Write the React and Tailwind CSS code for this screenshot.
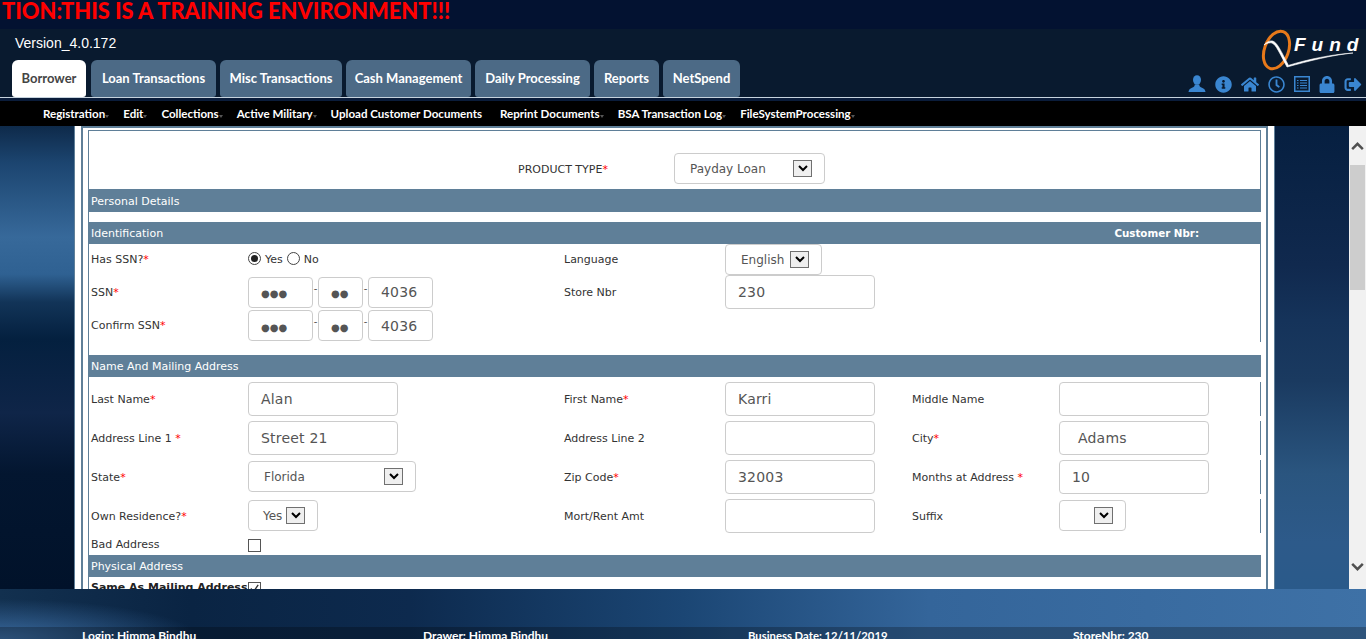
import React from "react";
import { FaHome, FaInfoCircle, FaLock, FaRegClock, FaSignOutAlt } from "react-icons/fa";

const tabs = [
  { label: "Borrower", width: "w-[74px] mr-[1px]", active: true },
  { label: "Loan Transactions", width: "w-[125px]" },
  { label: "Misc Transactions", width: "w-[122px]" },
  { label: "Cash Management", width: "w-[125px]" },
  { label: "Daily Processing", width: "w-[115px]" },
  { label: "Reports", width: "w-[65px]" },
  { label: "NetSpend", width: "w-[77px]" },
];

const menuItems = [
  { label: "Registration", arrow: true },
  { label: "Edit", arrow: true },
  { label: "Collections", arrow: true },
  { label: "Active Military", arrow: true },
  { label: "Upload Customer Documents" },
  { label: "Reprint Documents", arrow: true },
  { label: "BSA Transaction Log", arrow: true },
  { label: "FileSystemProcessing", arrow: true },
];

function UserIcon() {
  return (
    <svg viewBox="0 0 18 18" className="w-[18px] h-[18px]" fill="currentColor">
      <ellipse cx="9" cy="5" rx="4" ry="4.8" />
      <path d="M6.6 9.5 C7 11 6 12 3.5 13 C1.5 13.8 0.8 15 0.5 17 L17.5 17 C17.2 15 16.5 13.8 14.5 13 C12 12 11 11 11.4 9.5 Z" />
    </svg>
  );
}

function ListIcon() {
  return (
    <svg viewBox="0 0 16 16" className="w-[16px] h-[16px]" fill="none" stroke="currentColor">
      <rect x="0.75" y="0.75" width="14.5" height="14.5" strokeWidth="1.5" />
      <path d="M3 4.5h1.5M6 4.5h7M3 7h1.5M6 7h7M3 9.5h1.5M6 9.5h7M3 12h1.5M6 12h7" strokeWidth="1.2" />
    </svg>
  );
}

function Logo() {
  return (
    <div className="relative w-[105px] h-[42px]">
      <svg viewBox="0 0 105 42" className="absolute inset-0 w-[105px] h-[42px]" fill="none">
        <ellipse cx="19.5" cy="21" rx="12" ry="19.5" transform="rotate(20 19.5 21)" stroke="#e8791a" strokeWidth="3" />
        <path d="M7 16 C10 12.5 13 11.5 15.5 12 C20 13 24 22 31 35.5 L31 36.5 C52 30 75 25.5 96 24 C75 26 52 32 30 38 C23 25 19 15.5 15 14 C13 13.5 10 14 7 16 Z" fill="#ffffff" stroke="#ffffff" strokeWidth="0.6" />
      </svg>
      <span className="absolute left-[37px] top-[4px] font-['Liberation_Sans',sans-serif] font-bold italic text-[19px] leading-[24px] tracking-[6px] text-white">
        Fund
      </span>
    </div>
  );
}

function Req({ space }) {
  return <span className="text-[#f00]">{space ? " *" : "*"}</span>;
}

function Input({ value, className = "w-[150px]", small }) {
  return (
    <div
      className={`flex items-center border border-[#ccc] rounded-[4px] bg-white text-[#555] pl-[12px] ${
        small ? "h-[31px] pt-[1px]" : "h-[34px]"
      } text-[14px] tracking-[0.2px] whitespace-nowrap ${className}`}
    >
      {value}
    </div>
  );
}

function Dots({ count, className }) {
  return (
    <div className={`flex items-center border border-[#ccc] rounded-[4px] bg-white text-[#555] pl-[12px] pt-[3px] h-[31px] text-[10px] ${className}`}>
      {"●".repeat(count)}
    </div>
  );
}

function Dash() {
  return <span className="w-[5px] flex justify-center text-[#555] text-[10px] -translate-y-[4px]">-</span>;
}

function SsnFields() {
  return (
    <div className="flex items-center">
      <Dots count={3} className="w-[65px]" />
      <Dash />
      <Dots count={2} className="w-[45px]" />
      <Dash />
      <Input value="4036" small className="w-[65px]" />
    </div>
  );
}

function SelectBox({ value, className, textClass = "pl-[15px]" }) {
  return (
    <div className={`flex items-center justify-between border border-[#ccc] rounded-[4px] bg-white text-[#555] h-[31px] text-[12px] pr-[12px] ${className}`}>
      <span className={textClass}>{value}</span>
      <span className="flex items-center justify-center w-[19px] h-[17px] border border-[#707070] bg-[#efefef] shrink-0">
        <svg viewBox="0 0 10 7" className="w-[10px] h-[7px]" fill="none" stroke="#000" strokeWidth="2">
          <path d="M1 1 L5 5 L9 1" />
        </svg>
      </span>
    </div>
  );
}

function Bar({ children, right, height = "h-[22px] pt-[2px]" }) {
  return (
    <div className={`flex items-center justify-between bg-[#5f7f98] text-white text-[11px] pl-[2px] pr-[62px] ${height}`}>
      <span>{children}</span>
      {right && <span className="font-bold text-[10.3px]">{right}</span>}
    </div>
  );
}

function Row({ height, children }) {
  return (
    <div className={`grid grid-cols-[157px_316px_161px_187px_147px_1fr] items-center pl-[2px] pr-[1px] border-r border-[#5f7f98] [&>span]:translate-y-[1px] ${height}`}>
      {children}
    </div>
  );
}

function Radio({ checked }) {
  return (
    <span className="inline-flex items-center justify-center w-[13px] h-[13px] rounded-full border border-[#444] bg-white -translate-y-[2px]">
      {checked && <span className="w-[7px] h-[7px] rounded-full bg-[#222]" />}
    </span>
  );
}

function ChevronButton({ up }) {
  return (
    <div className={`flex items-center justify-center h-[39px] ${up ? "" : "pb-[5px]"}`}>
      <svg viewBox="0 0 14 9" className="w-[13px] h-[8px]" fill="none" stroke="#505050" strokeWidth="2.8">
        <path d={up ? "M1 8 L7 2 L13 8" : "M1 1 L7 7 L13 1"} />
      </svg>
    </div>
  );
}

export default function App() {
  return (
    <div className="w-[1366px] h-[639px] overflow-hidden flex flex-col bg-[#04122c] font-['DejaVu_Sans',Verdana,sans-serif]">
      {/* header */}
      <div className="h-[29px] bg-[#031231] pl-[2px] whitespace-nowrap font-['Lato',sans-serif] font-black text-[23px] leading-[20px] text-[#f00]">
        <span className="inline-block origin-left scale-x-[0.95]">TION:THIS IS A TRAINING ENVIRONMENT!!!</span>
      </div>
      <div className="h-[68px] flex justify-between bg-[#091a2f]">
        <div className="flex flex-col pl-[12px]">
          <div className="h-[31px] pl-[3px] pt-[6px] font-['Liberation_Sans',sans-serif] text-[14px] leading-[16px] text-white">
            Version_4.0.172
          </div>
          <div className="flex gap-[4px] font-['Lato',sans-serif] font-bold text-[13px]">
            {tabs.map((tab) => (
              <div
                key={tab.label}
                className={`flex items-center justify-center h-[37px] rounded-t-[6px] rounded-b-[3px] ${tab.width} ${
                  tab.active ? "bg-white text-[#444]" : "bg-[#4c6a86] text-white"
                }`}
              >
                {tab.label}
              </div>
            ))}
          </div>
        </div>
        <div className="flex flex-col items-end pr-[4px]">
          <Logo />
          <div className="flex items-center gap-[9px] h-[20px] mt-[3px] text-[#3a86d1]">
            <UserIcon />
            <FaInfoCircle className="w-[17px] h-[17px]" />
            <FaHome className="w-[18px] h-[17px]" />
            <FaRegClock className="w-[17px] h-[17px]" />
            <ListIcon />
            <FaLock className="w-[16px] h-[17px]" />
            <FaSignOutAlt className="w-[18px] h-[17px]" />
          </div>
        </div>
      </div>
      <div className="h-[1px] bg-[#c5d2dd]" />
      <div className="h-[3px] bg-[#0a1c3a]" />
      <div className="h-[25px] bg-black flex items-center gap-[18px] pl-[43px] font-['Lato',sans-serif] font-bold text-[11.55px] text-white whitespace-nowrap">
        {menuItems.map((item) => (
          <span key={item.label} className="relative">
            {item.label}
            {item.arrow && (
              <span className="absolute right-[-4px] bottom-[4px] border-x-[2px] border-t-[3px] border-x-transparent border-t-[#555]" />
            )}
          </span>
        ))}
      </div>

      {/* main */}
      <div className="h-[463px] flex">
        <div className="w-[74px] bg-[linear-gradient(180deg,#0e2a4a_0%,#1c4570_8%,#37699a_24%,#2f6192_32%,#123458_38%,#04203f_46%,#0f2548_62%,#031630_75%,#01122a_100%)]" />
        <div className="w-[1201px] bg-white border-x border-[#5f7f98] px-[6px] overflow-hidden">
          <div className="h-full border-x-2 border-t-2 border-[#5f7f98] px-[5px] pt-[2px]">
            <div className="border-l border-t border-[#5f7f98] text-[11px] text-[#333] whitespace-nowrap h-full">
              <div className="flex items-center h-[58px] pt-[17px] pl-[429px] border-r border-[#5f7f98]">
                <span className="w-[156px] translate-y-[2px]">
                  PRODUCT TYPE<Req />
                </span>
                <SelectBox value="Payday Loan" className="w-[151px]" />
              </div>
              <Bar height="h-[23px] pt-[3px]">Personal Details</Bar>
              <div className="h-[10px]" />
              <Bar right="Customer Nbr:">Identification</Bar>

              <Row height="h-[31px]">
                <span>
                  Has SSN?<Req />
                </span>
                <span className="flex items-center gap-[4px]">
                  <Radio checked />
                  <span>Yes</span>
                  <Radio />
                  <span>No</span>
                </span>
                <span>Language</span>
                <SelectBox value="English" className="w-[97px]" textClass="pl-[15px]" />
              </Row>
              <Row height="h-[34px]">
                <span>
                  SSN<Req />
                </span>
                <SsnFields />
                <span>Store Nbr</span>
                <Input value="230" />
              </Row>
              <Row height="h-[33px]">
                <span>
                  Confirm SSN<Req />
                </span>
                <SsnFields />
              </Row>
              <div className="h-[13px]" />

              <Bar>Name And Mailing Address</Bar>
              <div className="h-[5px]" />
              <div className="flex flex-col gap-[5px]">
                <Row height="h-[34px]">
                  <span>
                    Last Name<Req />
                  </span>
                  <Input value="Alan" />
                  <span>
                    First Name<Req />
                  </span>
                  <Input value="Karri" />
                  <span>Middle Name</span>
                  <Input value="" />
                </Row>
                <Row height="h-[34px]">
                  <span>
                    Address Line 1 <Req />
                  </span>
                  <Input value="Street 21" />
                  <span>Address Line 2</span>
                  <Input value="" />
                  <span>
                    City<Req />
                  </span>
                  <Input value="Adams" className="w-[150px] pl-[18px]" />
                </Row>
                <Row height="h-[34px]">
                  <span>
                    State<Req />
                  </span>
                  <SelectBox value="Florida" className="w-[168px] mb-[1px]" textClass="pl-[15px]" />
                  <span>
                    Zip Code<Req />
                  </span>
                  <Input value="32003" />
                  <span>
                    Months at Address <Req />
                  </span>
                  <Input value="10" />
                </Row>
                <Row height="h-[34px]">
                  <span>
                    Own Residence?<Req />
                  </span>
                  <SelectBox value="Yes" className="w-[70px] pr-[12px] mb-[1px]" textClass="pl-[14px]" />
                  <span>Mort/Rent Amt</span>
                  <Input value="" />
                  <span>Suffix</span>
                  <SelectBox value="" className="w-[67px] mb-[1px]" />
                </Row>
              </div>
              <div className="grid grid-cols-[157px_1fr] items-center h-[22px] pl-[2px]">
                <span className="translate-y-[1px]">Bad Address</span>
                <span className="w-[13px] h-[13px] border border-[#555] bg-white translate-y-[1px]" />
              </div>
              <Bar>Physical Address</Bar>
              <div className="flex items-center gap-[1px] pl-[2px] h-[22px] font-bold text-[#222]">
                <span>Same As Mailing Address</span>
                <span className="flex items-center justify-center w-[13px] h-[13px] border border-[#555] bg-white">
                  <svg viewBox="0 0 12 12" className="w-[11px] h-[11px]" fill="none" stroke="#333" strokeWidth="1.5">
                    <path d="M2 6 L5 9.5 L10 2" />
                  </svg>
                </span>
              </div>
            </div>
          </div>
        </div>
        <div className="w-[74px] bg-[linear-gradient(180deg,#061f40_0%,#10294e_30%,#15335a_42%,#1a3a60_55%,#2a557f_75%,#2d5a8a_90%,#2a5a8a_100%)]" />
        <div className="w-[17px] bg-[#f1f1f1] flex flex-col">
          <ChevronButton up />
          <div className="h-[125px] ml-[1px] mr-[1px] bg-[#cdcdcd]" />
          <div className="flex-1" />
          <ChevronButton />
        </div>
      </div>

      {/* footer */}
      <div className="h-[50px] flex flex-col bg-[radial-gradient(ellipse_200px_40px_at_0%_100%,#3a6a9f,transparent),linear-gradient(90deg,#12304f_0%,#0a2443_14%,#0d2a4e_30%,#1b4674_50%,#34659a_68%,#3e71a6_100%)]">
        <div className="flex-1" />
        <div className="h-[12px] overflow-hidden bg-black/25 flex pl-[82px] pt-[1px] font-['Lato',sans-serif] font-bold text-[12px] leading-[16px] text-white whitespace-nowrap">
          <span className="w-[341px]">Login: Himma Bindhu</span>
          <span className="w-[325px]">Drawer: Himma Bindhu</span>
          <span className="w-[325px] text-[11.3px]">Business Date: 12/11/2019</span>
          <span>StoreNbr: 230</span>
        </div>
      </div>
    </div>
  );
}
